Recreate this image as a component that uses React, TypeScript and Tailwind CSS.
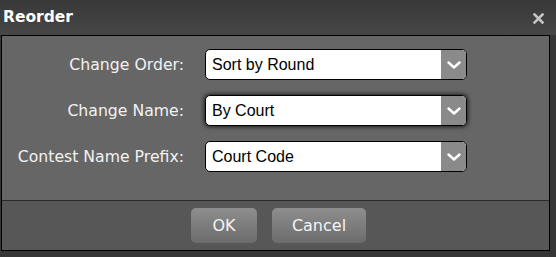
import React from 'react';

const rows = [
  { label: 'Change Order:', value: 'Sort by Round', focused: false },
  { label: 'Change Name:', value: 'By Court', focused: true },
  { label: 'Contest Name Prefix:', value: 'Court Code', focused: false },
];

const Chevron = () => (
  <svg width="14" height="8" viewBox="0 0 14 8" fill="none">
    <path d="M1.5 1.5 L7 6.5 L12.5 1.5" stroke="#ffffff" strokeWidth="2.4" strokeLinecap="round" strokeLinejoin="round" />
  </svg>
);

export default function App() {
  return (
    <div className="w-[556px] h-[257px] bg-[#363636] overflow-hidden font-['DejaVu_Sans',sans-serif]">
      {/* Title bar */}
      <div className="h-[35px] flex items-center justify-between pl-[3px] pr-[12px] bg-gradient-to-b from-[#383838] to-[#474747]">
        <span className="text-white text-[15.5px] font-bold leading-none pt-[1px]">Reorder</span>
        <svg width="11" height="11" viewBox="0 0 11 11" className="mt-[1px]">
          <path d="M1.5 1.5 L9.5 9.5 M9.5 1.5 L1.5 9.5" stroke="#c4c4c4" strokeWidth="2.6" strokeLinecap="square" />
        </svg>
      </div>

      {/* Panel */}
      <div className="ml-[1px] w-[549px] border border-black">
        <div className="bg-[#666666] h-[164px] pt-[13px] flex flex-col gap-[15px]">
          {rows.map((r) => (
            <div key={r.label} className="flex items-center">
              <div className="w-[182px] text-right text-[15.7px] text-[#f2f2f2] leading-none">{r.label}</div>
              <div
                className={`ml-[21px] w-[262px] h-[31px] flex items-stretch rounded-[5px] border border-black bg-white overflow-hidden ${r.focused ? 'shadow-[0_0_4px_1px_rgba(0,0,0,0.7)]' : ''}`}
              >
                <div className="flex-1 flex items-center pl-[6px] text-[16px] text-black font-['Liberation_Sans',sans-serif]">
                  {r.value}
                </div>
                <div className="w-[25px] bg-[#8a8a8a] flex items-center justify-center">
                  <Chevron />
                </div>
              </div>
            </div>
          ))}
        </div>
        <div className="h-[1px] bg-[#2a2a2a]" />
        <div className="h-[49px] bg-[#575757] flex justify-center gap-[15px] pt-[7px] pl-[6px]">
          <button className="w-[66px] h-[35px] rounded-[5px] bg-gradient-to-b from-[#8e8e8e] to-[#6c6c6c] text-[16px] text-[#f4f4f4]">
            OK
          </button>
          <button className="w-[94px] h-[35px] rounded-[5px] bg-gradient-to-b from-[#8e8e8e] to-[#6c6c6c] text-[16px] text-[#f4f4f4]">
            Cancel
          </button>
        </div>
      </div>
    </div>
  );
}
